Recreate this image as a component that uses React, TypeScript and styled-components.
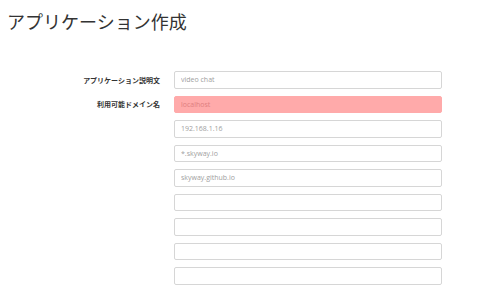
import styled, { createGlobalStyle } from "styled-components";

const GlobalStyle = createGlobalStyle`
  body {
    margin: 0;
    background: #fff;
    font-family: "Open Sans", "Noto Sans CJK JP", sans-serif;
    color: #333;
  }
`

const Page = styled.div`
  display: flex;
  flex-direction: column;
  padding: 0 0 0 7px;
`

const Title = styled.h1`
  margin: 9px 0 0;
  font-family: "Noto Sans CJK JP", sans-serif;
  font-size: 18px;
  font-weight: 400;
  line-height: 24px;
  color: #333;
`

const Form = styled.form`
  display: flex;
  flex-direction: column;
  gap: 7px;
  margin-top: 38px;
`

const Row = styled.div`
  display: flex;
  align-items: center;
  gap: 14px;
`

const Label = styled.label`
  width: 153px;
  text-align: right;
  font-family: "Noto Sans CJK JP", sans-serif;
  font-size: 7px;
  font-weight: 700;
  color: #333;
`

const Input = styled.input<{ $error?: boolean }>`
  box-sizing: border-box;
  width: 268px;
  height: 17.5px;
  padding: 0 6px;
  border: 1px solid ${(p) => (p.$error ? "#ffaaaa" : "#d6d6d6")};
  border-radius: 2px;
  background: ${(p) => (p.$error ? "#ffaaaa" : "#fff")};
  font-family: "Open Sans", sans-serif;
  font-size: 7px;
  font-weight: 400;
  color: #999;
  outline: none;

  &::placeholder {
    color: ${(p) => (p.$error ? "#e07f7f" : "#a0a0a0")};
  }
`

const domains = ["192.168.1.16", "*.skyway.io", "skyway.github.io", "", "", "", ""];

function App() {
  return (
    <>
      <GlobalStyle />
      <Page>
        <Title>アプリケーション作成</Title>
        <Form>
          <Row>
            <Label>アプリケーション説明文</Label>
            <Input placeholder="video chat" />
          </Row>
          <Row>
            <Label>利用可能ドメイン名</Label>
            <Input $error placeholder="localhost" />
          </Row>
          {domains.map((d, i) => (
            <Row key={i}>
              <Label />
              <Input placeholder={d} />
            </Row>
          ))}
        </Form>
      </Page>
    </>
  );
}

export default App;
